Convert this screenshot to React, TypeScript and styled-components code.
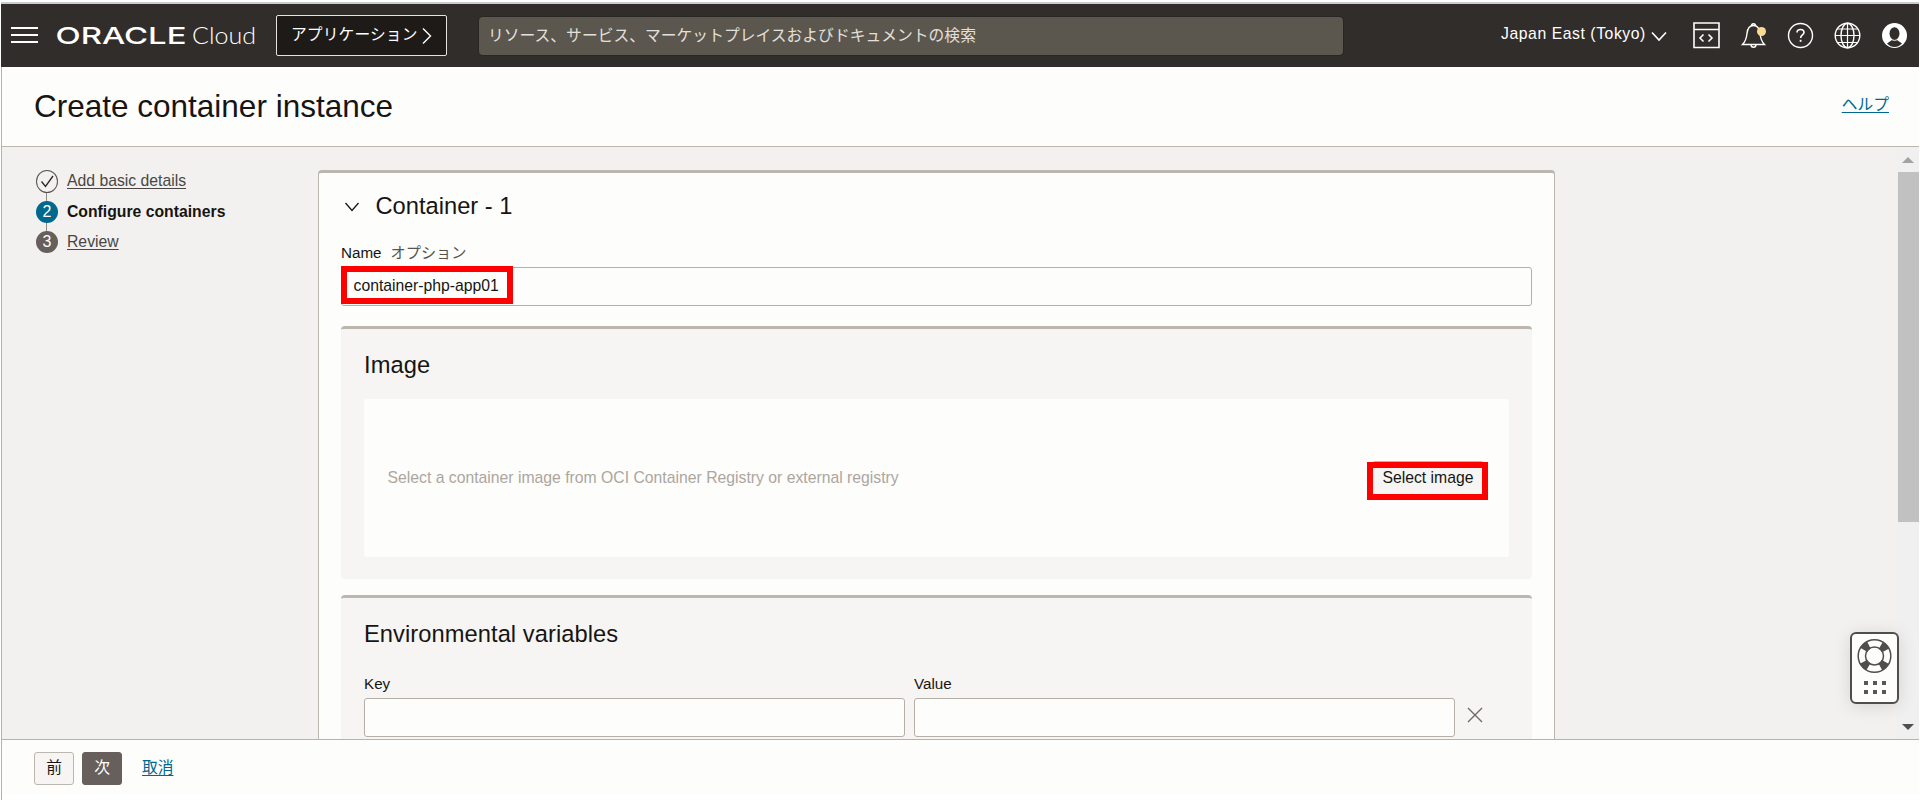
import React from "react";
import styled, { createGlobalStyle, css } from "styled-components";

const Global = createGlobalStyle`
  * { box-sizing: border-box; }
  html, body { margin: 0; padding: 0; }
  body {
    width: 1920px; height: 800px; overflow: hidden; background: #fff;
    font-family: "Liberation Sans", "Noto Sans CJK JP", sans-serif;
    font-size: 15.75px; color: #161513;
  }
  svg { display: block; flex: none; }
  a { color: inherit; }
`;

const Page = styled.div`
  display: flex; flex-direction: column; width: 1920px; height: 800px;
  padding: 2px 1px 0 1px;
`;
const TopBar = styled.header`
  display: flex; align-items: flex-start; height: 65px; flex: none;
  background: #312d2a; border-top: 2px solid #c8ccca; color: #fff;
`;
const MenuButton = styled.div`
  display: flex; flex-direction: column; gap: 5px; width: 27px; margin: 23px 0 0 10px;
`;
const MenuBar = styled.span`height: 2px; background: #fff;`;
const Logo = styled.div`margin: 16px 0 0 18px; width: 202px; height: 32px;`;
const AppsButton = styled.div`
  display: flex; align-items: center; width: 171px; height: 41px; margin: 11px 0 0 18px;
  padding: 0 0 2px 14px; gap: 3px; background: #1e1a17; border: 1px solid #e5e3e1; border-radius: 2px;
  line-height: 20px; white-space: nowrap; letter-spacing: 0.1px;
  svg { margin-top: 3px; }
`;
const Search = styled.div`
  width: 864px; height: 38px; margin: 13px 0 0 32px; padding-left: 9px;
  line-height: 37px; background: #5b564e; border-radius: 4px; color: #e3e0db;
  box-shadow: 0 0 0 1px #2a2624; white-space: nowrap; letter-spacing: 0.03px;
`;
const Region = styled.div`
  display: flex; align-items: center; margin: 19px 0 0 158px; line-height: 22px;
  width: 166px; justify-content: space-between; letter-spacing: 0.56px; white-space: nowrap;
  svg { margin-top: 5px; }
`;
const TopIcons = styled.div`display: flex; gap: 20px; margin: 17px 0 0 26px;`;

const Frame = styled.div`
  flex: 1; min-height: 0; display: flex; flex-direction: column;
  border-left: 1px solid #b5b3af;
`;
const TitleRow = styled.div`
  display: flex; justify-content: space-between; height: 80px; flex: none;
  background: #fdfdfb; border-bottom: 1px solid #bbb6ae; padding: 19px 30px 0 32px;
`;
const Title = styled.h1`margin: 0; font-weight: 400; font-size: 31.5px; line-height: 40px;`;
const LinkText = styled.a`
  color: #00688c; text-decoration: underline; line-height: 38px; text-underline-offset: 2px;
`;
const Body = styled.main`
  position: relative; display: flex; height: 592px; flex: none; overflow: hidden; background: #f2f1f0;
`;
const Steps = styled.nav`width: 282px; flex: none; margin: 23px 0 0 34px;`;
const Step = styled.div<{ $current?: boolean }>`
  display: flex; align-items: flex-start; gap: 9px; line-height: 22px; white-space: nowrap;
  color: ${(p) => (p.$current ? "#161513" : "#4a4643")};
  font-weight: ${(p) => (p.$current ? 700 : 400)};
`;
const StepLabel = styled.span<{ $link?: boolean }>`
  ${(p) => p.$link && css`text-decoration: underline; text-underline-offset: 2px;`}
`;
const StepDot = styled.span<{ $tone: "done" | "current" | "todo" }>`
  display: flex; align-items: center; justify-content: center;
  width: 22px; height: ${(p) => (p.$tone === "done" ? 23 : 22)}px; padding-bottom: 1px;
  border-radius: 50%; font-size: 16px; font-weight: 400; line-height: 21px; color: #fff;
  background: ${(p) => ({ done: "transparent", current: "#00688c", todo: "#665f5b" }[p.$tone])};
  ${(p) => p.$tone === "done" && css`border: 1px solid #57534f;`}
`;
const StepLine = styled.div`width: 1px; height: 8px; margin-left: 10px; background: #8d8985;`;

const Card = styled.section`
  width: 1237px; height: 800px; flex: none; margin-top: 23px; padding: 0 22px;
  background: #fdfdfb; border: 1px solid #bbb6ae; border-top-width: 3px; border-radius: 4px;
`;
const CardHead = styled.div`
  display: flex; align-items: center; height: 66px; padding: 1px 0 0 4px; gap: 16.5px;
  font-size: 23.7px;
`;
const FieldLabel = styled.div`
  display: flex; gap: 9px; font-size: 15.2px; line-height: 22px; height: 28px; padding-top: 3px;
`;
const Optional = styled.span`color: #57534f;`;
const Input = styled.div<{ $w?: number }>`
  position: relative; width: ${(p) => (p.$w ? p.$w + "px" : "100%")}; height: 39px; padding-left: 11.5px;
  background: #fdfdfb; border: 1px solid #b5afa7; border-radius: 3px; line-height: 35px;
`;
const Highlight = styled.span<{ $w: number; $x: number; $y: number }>`
  position: absolute; left: ${(p) => p.$x}px; top: ${(p) => p.$y}px;
  width: ${(p) => p.$w}px; height: 38px; border: 6px solid #fe0000;
`;
const Panel = styled.section<{ $h: number; $gap: number }>`
  height: ${(p) => p.$h}px; margin-top: ${(p) => p.$gap}px; padding: 0 23px;
  background: #f6f5f4; border-top: 3px solid #bbb6ae; border-radius: 4px;
`;
const PanelTitle = styled.h2<{ $h: number }>`
  margin: 0; height: ${(p) => p.$h}px; padding-top: 19px; font-size: 23.7px; line-height: 34px;
  font-weight: 400; letter-spacing: 0.06px;
`;
const ImageBox = styled.div`
  display: flex; align-items: center; justify-content: space-between; height: 158px;
  padding: 1px 24px 0 23.5px; background: #fdfdfb; border-radius: 3px; color: #aca69f;
`;
const Hint = styled.span`margin-top: -1px;`;
const SelectButton = styled.div`
  position: relative; width: 114px; height: 35px; text-align: center; line-height: 31px;
  color: #161513; background: #f6f5f4; border: 1px solid #bbb6ae; border-radius: 4px;
`;
const VarRow = styled.div`display: flex; gap: 9px;`;
const VarField = styled.div`flex: none;`;
const RemoveIcon = styled.div`margin: 37px 0 0 3px;`;

const Scrollbar = styled.div`
  position: absolute; right: 0; top: 0; width: 22px; height: 592px; padding: 10px 0 9px 1px;
  display: flex; flex-direction: column; background: #f0f0f1;
`;
const Thumb = styled.div`height: 350px; margin-top: 9px; margin-bottom: auto; background: #c1c1c1;`;
const Arrow = styled.div<{ $down?: boolean }>`
  width: 0; height: 0; margin-left: 4px; border: 6px solid transparent;
  ${(p) => p.$down
    ? css`border-top-color: #4f4f4f; border-bottom: 0;`
    : css`border-bottom-color: #a3a3a3; border-top: 0;`}
`;
const SupportWidget = styled.div`
  position: absolute; left: 1848px; top: 485px; width: 49px; height: 72px;
  display: flex; flex-direction: column; align-items: center; padding-top: 4px;
  background: #fdfdfb; border: 2px solid #514d4b; border-radius: 6px;
  box-shadow: 0 2px 18px rgba(0, 0, 0, 0.12);
`;
const DotGrid = styled.div`
  display: grid; grid-template-columns: repeat(3, 4px); gap: 5px; margin-top: 7px;
`;
const GridDot = styled.i`height: 4px; background: #5a5653;`;

const Footer = styled.footer`
  height: 55px; display: flex; align-items: flex-start; padding: 12px 0 0 32px;
  background: #fdfdfb; border-top: 1px solid #b5b3af;
`;
const FooterButton = styled.div<{ $primary?: boolean }>`
  width: 40px; height: 33px; margin-right: 8px; text-align: center; line-height: 30px; border-radius: 3px;
  border: 1px solid ${(p) => (p.$primary ? "#665f5b" : "#bbb6ae")};
  background: ${(p) => (p.$primary ? "#665f5b" : "#f6f5f4")};
  color: ${(p) => (p.$primary ? "#fff" : "#161513")};
`;
const CancelLink = styled(LinkText)`margin-left: 12px; line-height: 31px;`;

const Line = { fill: "none", stroke: "#fff", strokeWidth: 1.4 };

export default function App() {
  return (
    <Page>
      <Global />
      <TopBar>
        <MenuButton><MenuBar /><MenuBar /><MenuBar /></MenuButton>
        <Logo>
          <svg width="202" height="32" fill="#fff">
            <text x="-0.5" y="24" fontFamily="Inter" fontWeight="500" fontSize="23.4" textLength="131" lengthAdjust="spacingAndGlyphs">ORACLE</text>
            <text x="136" y="24" fontFamily="Lato" fontWeight="300" fontSize="24" textLength="64" lengthAdjust="spacingAndGlyphs">Cloud</text>
          </svg>
        </Logo>
        <AppsButton>
          アプリケーション
          <svg width="12" height="18"><path d="M2 1.5L9.5 9L2 16.5" {...Line} /></svg>
        </AppsButton>
        <Search>リソース、サービス、マーケットプレイスおよびドキュメントの検索</Search>
        <Region>
          Japan East (Tokyo)
          <svg width="16" height="11"><path d="M1 1.5L8 9L15 1.5" {...Line} strokeWidth={1.6} /></svg>
        </Region>
        <TopIcons>
          <svg width="27" height="28">
            <path d="M1 2H26V26.5H1ZM1 8.5H26" {...Line} strokeWidth={1.6} />
            <path d="M10.5 13.5L7 17L10.5 20.500M15.500 13.500L19 17L15.500 20.500" {...Line} strokeWidth={1.6} />
          </svg>
          <svg width="27" height="28">
            <path d="M2.5 23.5C6 20 6.5 17 7 12.500C7.500 7.500 9.500 4.500 13.500 4.500C17.500 4.500 19.500 7.500 20 12.500C20.500 17 21 20 24.500 23.500Z" {...Line} />
            <path d="M11.500 5A2 2.300 0 1 1 15.500 5M11 23.500A2.500 2.800 0 0 0 16 23.500" {...Line} />
            <circle cx="21.500" cy="10.500" r="4.500" fill="#f9d994" />
          </svg>
          <svg width="27" height="28">
            <circle cx="13.5" cy="14.5" r="12" {...Line} />
            <path d="M10 11.500C10 7.500 17 7.500 17 11.500C17 14 13.600 14 13.600 17" {...Line} strokeWidth={1.6} />
            <rect x="12.700" y="18.800" width="1.800" height="2" fill="#fff" />
          </svg>
          <svg width="27" height="28">
            <circle cx="13.500" cy="14.500" r="12.300" {...Line} />
            <ellipse cx="13.500" cy="14.500" rx="6.500" ry="12.300" {...Line} />
            <path d="M13.500 2V27M1 14.500H26M3 8H24M3 21.500H24" {...Line} strokeWidth={1.2} />
          </svg>
          <svg width="27" height="28">
            <circle cx="13.500" cy="14.500" r="12.500" fill="#fff" />
            <ellipse cx="13.500" cy="12.500" rx="5" ry="6.300" fill="#312d2a" />
            <path d="M11 16H16V19L21 22.500Q17.500 26 13.500 26Q9.500 26 6 22.500L11 19Z" fill="#312d2a" />
            <path d="M11 18.800Q13.500 20 16 18.800" fill="none" stroke="#fff" strokeWidth="1" />
          </svg>
        </TopIcons>
      </TopBar>
      <Frame>
        <TitleRow>
          <Title>Create container instance</Title>
          <LinkText>ヘルプ</LinkText>
        </TitleRow>
        <Body>
          <Steps>
            <Step>
              <StepDot $tone="done">
                <svg width="16" height="16"><path d="M2.500 8.500L6.500 13.500L14 3" fill="none" stroke="#2a2624" strokeWidth="1.300" /></svg>
              </StepDot>
              <StepLabel $link>Add basic details</StepLabel>
            </Step>
            <StepLine />
            <Step $current><StepDot $tone="current">2</StepDot><StepLabel>Configure containers</StepLabel></Step>
            <StepLine />
            <Step><StepDot $tone="todo">3</StepDot><StepLabel $link>Review</StepLabel></Step>
          </Steps>
          <Card>
            <CardHead>
              <svg width="14" height="10"><path d="M0.500 1L7 8.500L13.500 1" fill="none" stroke="#161513" strokeWidth="1.300" /></svg>
              Container - 1
            </CardHead>
            <FieldLabel>Name <Optional>オプション</Optional></FieldLabel>
            <Input>container-php-app01<Highlight $w={172} $x={-1} $y={-2} /></Input>
            <Panel $h={253} $gap={20}>
              <PanelTitle $h={70}>Image</PanelTitle>
              <ImageBox>
                <Hint>Select a container image from OCI Container Registry or external registry</Hint>
                <SelectButton>Select image<Highlight $w={121} $x={-5} $y={0} /></SelectButton>
              </ImageBox>
            </Panel>
            <Panel $h={300} $gap={16}>
              <PanelTitle $h={72}>Environmental variables</PanelTitle>
              <VarRow>
                <VarField><FieldLabel>Key</FieldLabel><Input $w={541} /></VarField>
                <VarField><FieldLabel>Value</FieldLabel><Input $w={541} /></VarField>
                <RemoveIcon>
                  <svg width="16" height="16"><path d="M1 1L15 15M15 1L1 15" stroke="#6f6a66" strokeWidth="1.400" /></svg>
                </RemoveIcon>
              </VarRow>
            </Panel>
          </Card>
          <Scrollbar><Arrow /><Thumb /><Arrow $down /></Scrollbar>
          <SupportWidget>
            <svg width="35" height="36" viewBox="0.5 0 35 36" fill="none">
              <circle cx="18" cy="18" r="12.500" stroke="#514d4b" strokeWidth="8" strokeDasharray="7 12.635" strokeDashoffset="-6.320" />
              <circle cx="18" cy="18" r="16.300" stroke="#514d4b" strokeWidth="1.500" />
              <circle cx="18" cy="18" r="9" stroke="#514d4b" strokeWidth="1.500" />
            </svg>
            <DotGrid>{[0, 1, 2, 3, 4, 5].map((i) => <GridDot key={i} />)}</DotGrid>
          </SupportWidget>
        </Body>
        <Footer>
          <FooterButton>前</FooterButton>
          <FooterButton $primary>次</FooterButton>
          <CancelLink>取消</CancelLink>
        </Footer>
      </Frame>
    </Page>
  );
}
